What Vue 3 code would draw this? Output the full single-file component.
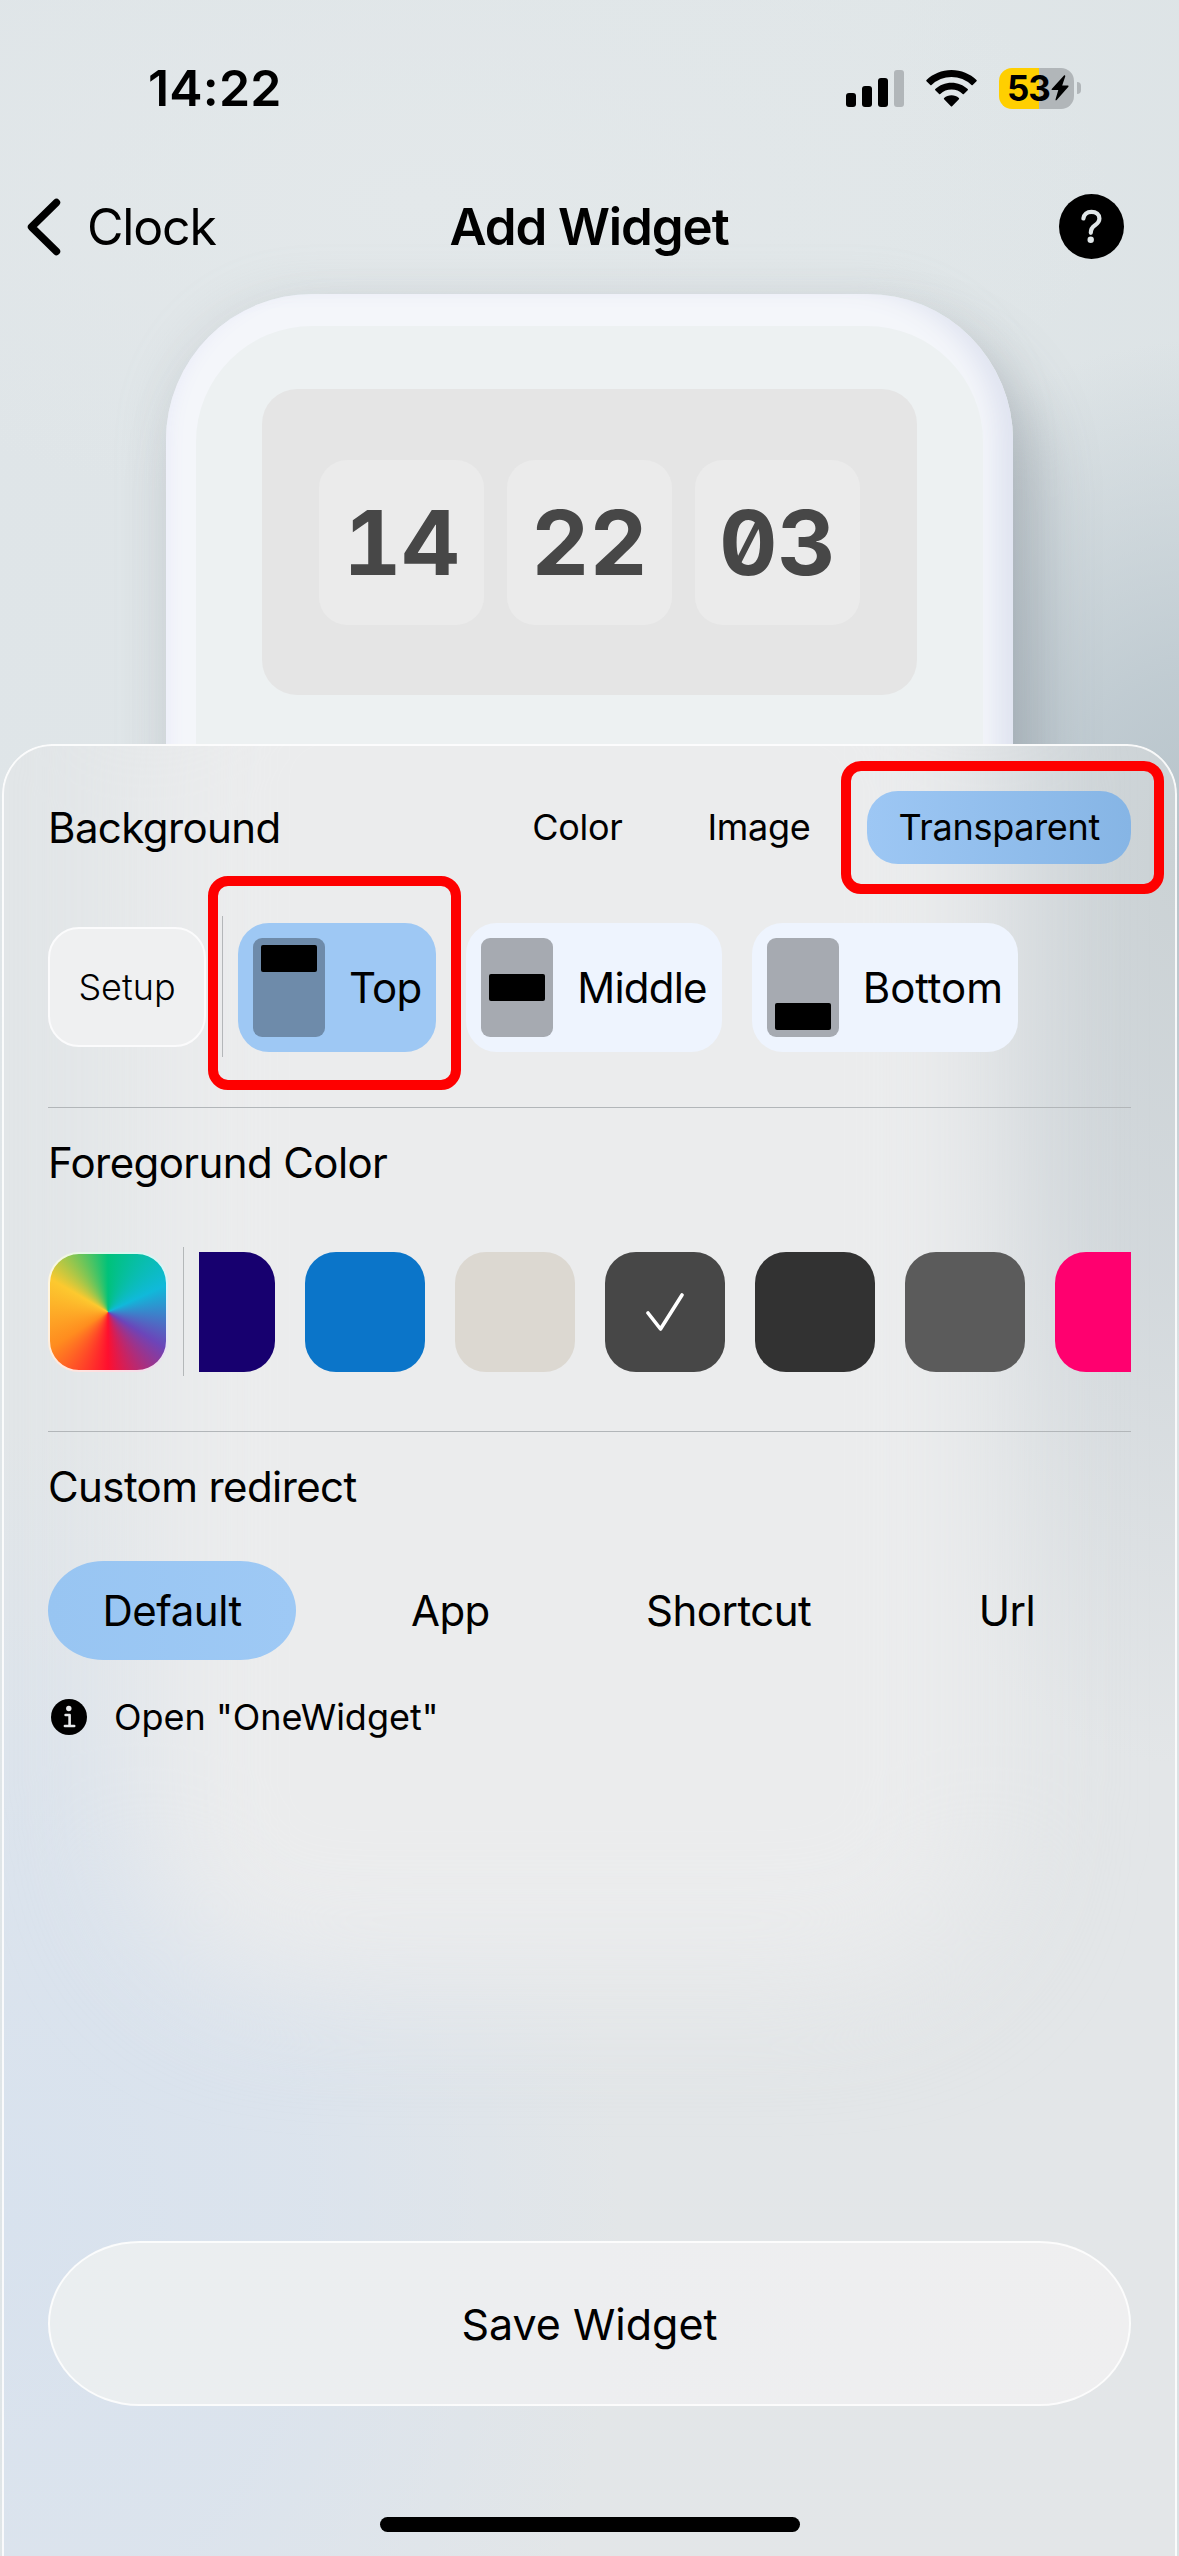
<script setup>
const time = ['14', '22', '03']
const backgroundModes = [
  { label: 'Color', active: false },
  { label: 'Image', active: false },
  { label: 'Transparent', active: true },
]
const positions = [
  { label: 'Top', slot: 'start', active: true },
  { label: 'Middle', slot: 'center', active: false },
  { label: 'Bottom', slot: 'end', active: false },
]
const colors = [
  { value: '#17006f' },
  { value: '#0b75c9' },
  { value: '#dcd8d1' },
  { value: '#474747', selected: true },
  { value: '#323232' },
  { value: '#5b5b5b' },
  { value: '#ff006f' },
]
const redirects = [
  { label: 'Default', active: true },
  { label: 'App', active: false },
  { label: 'Shortcut', active: false },
  { label: 'Url', active: false },
]
</script>

<template>
  <main class="screen">
    <header class="status">
      <span class="clock">14:22</span>
      <div class="indicators">
        <svg class="signal" width="58" height="37" viewBox="0 0 58 37">
          <rect x="0" y="23" width="10" height="14" rx="3" />
          <rect x="16" y="16" width="10" height="21" rx="3" />
          <rect x="32" y="8" width="10" height="29" rx="3" />
          <rect x="48" y="0" width="10" height="37" rx="3" fill="#b1b6b9" />
        </svg>
        <svg class="wifi" width="51" height="37" viewBox="0 0 51 37">
          <path d="M25.500 0C15.800 0 6.900 3.800 0.500 10.100Q0 10.700 0.500 11.300L4.300 15.100Q4.900 15.600 5.500 15.100A28.500 28.500 0 0 1 45.500 15.100Q46.100 15.600 46.700 15.100L50.500 11.300Q51 10.700 50.500 10.100C44.100 3.800 35.200 0 25.500 0Z" />
          <path d="M25.500 12.700C19.300 12.700 13.600 15.100 9.300 19Q8.700 19.600 9.300 20.200L13.100 24Q13.700 24.500 14.300 24A16.500 16.500 0 0 1 36.700 24Q37.300 24.500 37.900 24L41.700 20.200Q42.300 19.600 41.700 19C37.400 15.100 31.700 12.700 25.500 12.700Z" />
          <path d="M25.500 25.300C22.700 25.300 20.100 26.300 18.100 28Q17.500 28.600 18.100 29.200L24.900 36.200Q25.500 36.800 26.100 36.200L32.900 29.200Q33.500 28.600 32.900 28C30.900 26.300 28.300 25.300 25.500 25.300Z" />
        </svg>
        <div class="battery">
          <div class="cell">
            <span>53</span>
            <svg width="18" height="26" viewBox="0 0 18 26">
              <path d="M13.200 0.300L0.700 13.900Q0 15 1.300 15H7.300L4.500 24.600Q4.600 26 5.700 25.100L17.400 11.800Q18 10.600 16.800 10.600H11.200L14.300 1.300Q14.300 0 13.200 0.300Z" />
            </svg>
          </div>
          <i class="nub"></i>
        </div>
      </div>
    </header>

    <nav class="navbar">
      <a class="back">
        <svg width="34" height="58" viewBox="0 0 34 58">
          <path d="M29.500 4.500L4.500 29L29.500 53.500" fill="none" stroke="#000" stroke-width="7.400" stroke-linecap="round" stroke-linejoin="round" />
        </svg>
        <span>Clock</span>
      </a>
      <h1>Add Widget</h1>
      <svg class="help" width="65" height="65" viewBox="0 0 65 65">
        <circle cx="32.500" cy="32.500" r="32.500" />
        <path d="M24.400 24.500C24.900 20.300 28 17.800 32.400 17.800C37.200 17.800 40.400 20.600 40.400 24.500C40.400 27.800 38.600 29.500 35.700 31.400C32.800 33.300 31.800 35 31.800 38.800" fill="none" stroke="#e0e6e8" stroke-width="4.200" stroke-linecap="round" />
        <circle cx="31.700" cy="45.800" r="3.200" fill="#e0e6e8" />
      </svg>
    </nav>

    <section class="preview">
      <div class="phone">
        <div class="display">
          <div class="widget">
            <div v-for="part in time" :key="part" class="tile">{{ part }}</div>
          </div>
        </div>
      </div>
    </section>

    <section class="sheet">
      <div class="glow"></div>
      <div class="content">
        <div class="heading">
          <h2>Background</h2>
          <div class="modes">
            <span v-for="m in backgroundModes" :key="m.label" class="mode" :class="{ active: m.active }">{{ m.label }}</span>
          </div>
        </div>

        <div class="options">
          <button class="setup">Setup</button>
          <i class="divider"></i>
          <div class="positions">
            <button v-for="p in positions" :key="p.label" class="position" :class="{ active: p.active }">
              <span class="thumb" :class="p.slot"><i></i></span>
              <span>{{ p.label }}</span>
            </button>
          </div>
        </div>

        <hr />
        <h2 class="title">Foregorund Color</h2>
        <div class="palette">
          <div class="wheel"></div>
          <i class="divider"></i>
          <div class="swatches">
            <div v-for="c in colors" :key="c.value" class="swatch" :style="{ background: c.value }">
              <svg v-if="c.selected" width="38" height="38" viewBox="0 0 38 38">
                <path d="M2 20L14.500 36L36 2" fill="none" stroke="#fff" stroke-width="3.600" stroke-linecap="round" stroke-linejoin="round" />
              </svg>
            </div>
          </div>
        </div>

        <hr class="second" />
        <h2 class="title">Custom redirect</h2>
        <div class="redirects">
          <span v-for="r in redirects" :key="r.label" class="redirect" :class="{ active: r.active }">{{ r.label }}</span>
        </div>
        <div class="info">
          <svg width="36" height="36" viewBox="0 0 36 36">
            <circle cx="18" cy="18" r="18" />
            <circle cx="17.800" cy="9.500" r="2.700" fill="#e8eaec" />
            <path d="M14.600 16H18.600V26.600M13.900 27H23.200" fill="none" stroke="#e8eaec" stroke-width="2.600" stroke-linecap="round" stroke-linejoin="round" />
          </svg>
          <span>Open "OneWidget"</span>
        </div>

        <button class="save">Save Widget</button>
        <div class="home"></div>
      </div>
      <div class="marker marker-mode"></div>
      <div class="marker marker-position"></div>
    </section>
  </main>
</template>

<style>
html,
body {
  margin: 0;
  background: #e0e5e8;
}
</style>

<style scoped>
.screen {
  display: flex;
  flex-direction: column;
  width: 1179px;
  height: 2556px;
  overflow: hidden;
  color: #000;
  font-family: Inter, "Liberation Sans", sans-serif;
  background:
    radial-gradient(ellipse 430px 520px at 1200px 860px, #b6c2c9 0%, rgba(187, 199, 206, 0.85) 35%, rgba(205, 214, 220, 0) 100%),
    radial-gradient(ellipse 700px 320px at 420px 200px, #e3e8ea, rgba(227, 232, 234, 0)),
    linear-gradient(100deg, #dfe5e8 0%, #e0e6e8 55%, #dae1e4 100%);
}

h1,
h2,
button {
  margin: 0;
  padding: 0;
  border: 0;
  font: inherit;
  color: inherit;
  background: none;
}

svg {
  display: block;
  flex: none;
}

.status {
  display: flex;
  flex: none;
  justify-content: space-between;
  align-items: center;
  height: 176px;
  padding: 0 98px 0 148px;
  box-sizing: border-box;
}

.clock {
  font-size: 50px;
  font-weight: 600;
  letter-spacing: 0.2px;
}

.indicators {
  display: flex;
  align-items: center;
}

.wifi {
  margin: 0 22px;
}

.battery {
  display: flex;
  align-items: center;
  gap: 3px;
}

.cell {
  display: flex;
  align-items: center;
  gap: 1px;
  width: 75px;
  height: 41px;
  padding-left: 8px;
  box-sizing: border-box;
  border-radius: 13px;
  background: linear-gradient(90deg, #ffcf00 40px, #b1b6b9 40px);
  font-size: 35px;
  font-weight: 700;
  letter-spacing: -1px;
}

.nub {
  width: 4px;
  height: 12px;
  border-radius: 0 5px 5px 0;
  background: #b1b6b9;
}

.navbar {
  display: grid;
  flex: none;
  grid-template-columns: 1fr auto 1fr;
  align-items: center;
  height: 101px;
  margin-bottom: 17px;
  padding: 0 55px 0 27px;
}

.back {
  display: flex;
  align-items: center;
  gap: 26px;
  font-size: 50px;
  letter-spacing: -1.2px;
}

.navbar h1 {
  margin-left: 27px;
  font-size: 51px;
  font-weight: 600;
  letter-spacing: -1.1px;
}

.help {
  justify-self: end;
}

.preview {
  display: flex;
  flex: none;
  justify-content: center;
  height: 450px;
}

.phone {
  width: 847px;
  height: 520px;
  padding: 32px 30px 0;
  box-sizing: border-box;
  border-radius: 146px 146px 0 0;
  background: #f4f6fa;
  box-shadow:
    24px 40px 60px rgba(95, 105, 118, 0.34),
    -4px -2px 50px rgba(170, 180, 185, 0.18),
    inset -26px 0 26px -10px #dfe3f0,
    inset 12px 0 16px -8px #ebedf9;
}

.display {
  display: flex;
  justify-content: center;
  height: 488px;
  padding-top: 63px;
  box-sizing: border-box;
  border-radius: 116px 116px 0 0;
  background: #edf1f2;
}

.widget {
  display: flex;
  justify-content: center;
  align-items: center;
  gap: 23px;
  width: 655px;
  height: 306px;
  border-radius: 35px;
  background: #e5e5e5;
}

.tile {
  display: flex;
  justify-content: center;
  align-items: center;
  width: 165px;
  height: 165px;
  border-radius: 28px;
  background: #ebebeb;
  color: #474747;
  font-size: 90px;
  font-weight: 700;
  font-feature-settings: "tnum", "zero";
}

.sheet {
  position: relative;
  flex: none;
  width: 1175px;
  height: 1812px;
  margin: 0 2px;
  overflow: hidden;
  border-radius: 50px 50px 0 0;
  background:
    radial-gradient(ellipse 420px 900px at 1175px 120px, #cbd2d5 0%, rgba(208, 214, 218, 0.85) 45%, rgba(224, 228, 231, 0) 100%),
    radial-gradient(ellipse 620px 800px at 0px 1480px, #d8e2ee 0%, rgba(218, 227, 238, 0.8) 50%, rgba(225, 229, 233, 0) 100%),
    linear-gradient(90deg, #e2e6e8, #e3e6e8);
}

.sheet::after {
  content: "";
  position: absolute;
  inset: 0;
  border: 2px solid rgba(255, 255, 255, 0.85);
  border-bottom: 0;
  border-radius: 50px 50px 0 0;
  pointer-events: none;
}

/* Soft light of the phone shell behind the sheet */
.glow {
  position: absolute;
  top: -160px;
  left: 135px;
  width: 860px;
  height: 1400px;
  border-radius: 160px;
  background: #ebeced;
  filter: blur(64px);
}

.content {
  position: relative;
  display: flex;
  flex-direction: column;
  padding: 47px 46px 0;
}

.heading {
  display: flex;
  justify-content: space-between;
  align-items: center;
  height: 73px;
}

h2 {
  font-size: 42px;
  line-height: 54px;
  letter-spacing: -0.6px;
}

.modes {
  display: flex;
  gap: 26px;
  font-size: 36px;
  letter-spacing: -0.3px;
}

.mode {
  height: 73px;
  padding: 0 31px;
  border-radius: 31px;
  line-height: 73px;
}

.mode:first-child {
  margin-right: -3px;
}

.mode.active {
  background: linear-gradient(90deg, #9dc7f4, #86b5e5);
}

.options {
  display: flex;
  align-items: center;
  height: 141px;
  margin-top: 52px;
}

.setup {
  width: 158px;
  height: 120px;
  box-sizing: border-box;
  border: 2px solid #fbfbfc;
  border-radius: 31px;
  background: #eff0f1;
  font-size: 36px;
  font-weight: 300;
}

.divider {
  flex: none;
  align-self: stretch;
  width: 1px;
  margin: 0 15px 0 16px;
  background: #b4b7b9;
}

.positions {
  display: flex;
  gap: 30px;
  padding-top: 2px;
}

.position {
  display: flex;
  align-items: center;
  gap: 24px;
  height: 129px;
  padding: 0 15px;
  border-radius: 31px;
  background: #eef4fe;
  font-size: 42px;
  letter-spacing: -0.8px;
}

.position:last-child {
  letter-spacing: -0.1px;
}

.position.active {
  background: #9ec8f4;
}

.thumb {
  display: flex;
  justify-content: center;
  width: 72px;
  height: 99px;
  padding: 7px 0;
  box-sizing: border-box;
  border-radius: 9px;
  background: rgba(0, 0, 0, 0.3);
}

.thumb i {
  width: 56px;
  height: 27px;
  border-radius: 2px;
  background: #000;
}

.thumb.start {
  align-items: flex-start;
}

.thumb.center {
  align-items: center;
}

.thumb.end {
  align-items: flex-end;
}

hr {
  width: 100%;
  height: 1px;
  margin: 50px 0 28px;
  border: 0;
  background: #b2b6b9;
}

hr.second {
  margin-top: 55px;
}

.palette {
  display: flex;
  align-items: center;
  height: 129px;
  margin-top: 57px;
}

.palette .divider {
  margin: 0 15px;
}

.wheel {
  flex: none;
  width: 120px;
  height: 120px;
  box-sizing: border-box;
  border: 2px solid rgba(255, 255, 255, 0.85);
  border-radius: 31px;
  background: conic-gradient(#00c27a, #10b9da 65deg, #6c45b9 122deg, #ff0f2f 180deg, #ff8c1f 238deg, #fcc92f 300deg, #00c27a) border-box;
}

.swatches {
  display: flex;
  flex: 1;
  gap: 30px;
  overflow: hidden;
}

.swatch {
  display: flex;
  flex: none;
  justify-content: center;
  align-items: center;
  width: 120px;
  height: 120px;
  border-radius: 31px;
}

.swatch:first-child {
  margin-left: -44px;
}

.redirects {
  display: grid;
  grid-template-columns: repeat(4, 1fr);
  gap: 30px;
  height: 99px;
  margin-top: 47px;
  font-size: 42px;
  line-height: 99px;
  letter-spacing: -0.5px;
  text-align: center;
}

.redirect.active {
  border-radius: 56px / 50px;
  background: linear-gradient(90deg, #98c5f2, #9ec9f5);
}

.info {
  display: flex;
  align-items: center;
  gap: 27px;
  height: 44px;
  margin-top: 35px;
  padding-left: 3px;
  font-size: 36px;
}

.save {
  height: 165px;
  margin-top: 502px;
  box-sizing: border-box;
  border: 2px solid rgba(255, 255, 255, 0.8);
  border-radius: 92px / 83px;
  background: linear-gradient(90deg, #eaeef0, #edeef0 50%, #efeff0);
  font-size: 43px;
}

.home {
  align-self: center;
  width: 420px;
  height: 15px;
  margin-top: 111px;
  border-radius: 8px;
  background: #000;
}

/* Callout frames laid over the controls */
.marker {
  position: absolute;
  z-index: 1;
  box-sizing: border-box;
  border: 10.5px solid #fe0000;
  border-radius: 20px;
}

.marker-mode {
  top: 17px;
  left: 839px;
  width: 323px;
  height: 133px;
}

.marker-position {
  top: 132px;
  left: 206px;
  width: 253px;
  height: 214px;
}
</style>
